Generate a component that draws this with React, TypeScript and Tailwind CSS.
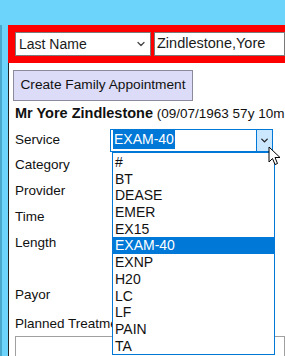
import { ChevronDown } from "lucide-react";

const services = ["#", "BT", "DEASE", "EMER", "EX15", "EXAM-40", "EXNP", "H20", "LC", "LF", "PAIN", "TA"];

const labels = ["Category", "Provider", "Time", "Length"];

export default function App() {
    return (
        <div className="relative w-[285px] h-[356px] overflow-hidden bg-[#6cd3fa] text-[13.5px] text-[#111] font-['Liberation_Sans',Arial,sans-serif]">
            <div className="h-[25px]" />
            <div className="flex h-[331px]">
                <div className="w-[8px] shrink-0 border-l-2 border-[#4aa8cc]" />
                <div className="flex-1 flex flex-col min-w-0">
                    {/* search bar */}
                    <div className="h-[38px] shrink-0 bg-[#ff0000] flex items-center pl-[7px] gap-[3px]">
                        <div className="w-[136px] h-[24px] shrink-0 bg-white border border-[#7a7a7a] flex items-center justify-between pl-[3px] pr-[3px]">
                            <span className="text-[14px] text-[#1a1a1a]">Last Name</span>
                            <ChevronDown className="w-[12px] h-[12px] text-[#444]" strokeWidth={2.5} />
                        </div>
                        <div className="flex-1 h-[24px] bg-white border border-[#7a7a7a] flex items-center pl-[2px] overflow-hidden">
                            <span className="text-[14.5px] text-[#1a1a1a] whitespace-nowrap">Zindlestone,Yore</span>
                        </div>
                    </div>

                    {/* appointment panel */}
                    <div className="flex-1 min-h-0 overflow-hidden bg-white border-l border-[#222] pl-[4px]">
                        <div className="h-[7px]" />
                        <button className="h-[31px] w-[180px] bg-[#dcdcf8] border border-[#8a8a9a] text-[13.7px] text-[#111]">
                            Create Family Appointment
                        </button>
                        <div className="h-[26px] flex items-center pl-[2px] whitespace-nowrap">
                            <span className="font-bold text-[14.5px]">Mr Yore Zindlestone</span>
                            <span>&nbsp;(09/07/1963 57y 10m</span>
                        </div>
                        <div className="h-[2px]" />
                        <div className="h-[23px] flex items-center">
                            <span className="w-[97px] pl-[2px]">Service</span>
                            <div className="w-[163px] h-[23px] border border-[#0078d7] flex items-center">
                                <div className="flex-1 pl-[2px]">
                                    <span className="bg-[#0078d7] text-white px-[1px] text-[14px] leading-[19px] inline-block">EXAM-40</span>
                                </div>
                                <div className="w-[16px] h-full bg-[#cce8ff] border-l border-[#0078d7] flex items-center justify-center">
                                    <ChevronDown className="w-[11px] h-[11px] text-[#222]" strokeWidth={3} />
                                </div>
                            </div>
                        </div>
                        {labels.map((label) => (
                            <div key={label} className="h-[26px] flex items-center pl-[2px]">
                                {label}
                            </div>
                        ))}
                        <div className="h-[26px]" />
                        <div className="h-[27px] flex items-center pl-[2px]">Payor</div>
                        <div className="h-[8px]" />
                        <div className="h-[14px] flex items-center pl-[2px] whitespace-nowrap">Planned Treatment</div>
                        <div className="h-[5px]" />
                        <div className="ml-[2px] h-[30px] border border-[#a0a0a0] bg-white" />
                    </div>
                </div>
            </div>

            {/* open dropdown list */}
            <div className="absolute left-[112px] top-[152px] w-[163px] h-[203px] bg-white border border-[#0078d7] pt-[1px]">
                {services.map((s) => (
                    <div
                        key={s}
                        className={
                            s === "EXAM-40"
                                ? "h-[16.7px] leading-[16.7px] pl-[2px] text-[14px] bg-[#0078d7] text-white"
                                : "h-[16.7px] leading-[16.7px] pl-[2px] text-[14px] text-[#111]"
                        }
                    >
                        {s}
                    </div>
                ))}
            </div>

            {/* mouse cursor */}
            <svg className="absolute left-[268px] top-[146px]" width="14" height="22" viewBox="0 0 14 22">
                <path d="M1 1 L1 16 L4.5 12.5 L7 18.5 L9.5 17.5 L7 11.5 L12 11.5 Z" fill="white" stroke="black" strokeWidth="1" strokeLinejoin="round" />
            </svg>
        </div>
    );
}
